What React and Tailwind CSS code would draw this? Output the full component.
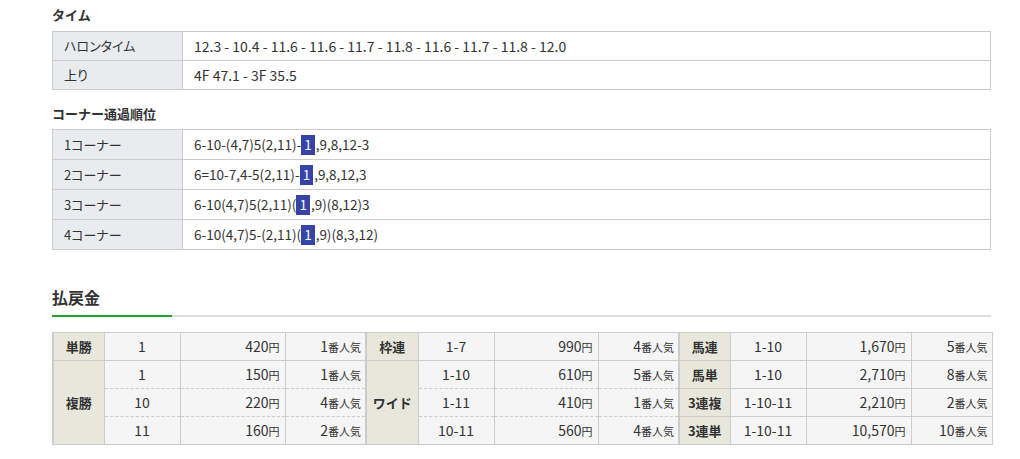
import React from "react";

const F = { fontFamily: '"Noto Sans CJK JP", "Noto Sans", sans-serif' };

function Badge() {
  return (
    <span className="flex items-center justify-center h-[20px] bg-[#3644a8] text-white px-[3px] mr-[1px]">1</span>
  );
}

function InfoTable({ rows, rowH, valSize }) {
  return (
    <table className="w-[939px] border-collapse table-fixed text-[13px] text-[#333]">
      <colgroup>
        <col className="w-[130px]" />
        <col />
      </colgroup>
      <tbody>
        {rows.map((r, i) => (
          <tr key={i} className={rowH}>
            <td className="border border-[#ccc] bg-[#e9ecef] pl-[11px] p-0 [font-feature-settings:'palt']">{r[0]}</td>
            <td className={`border border-[#ccc] bg-white pl-[11px] p-0 ${valSize}`}>
              <div className="flex items-center whitespace-pre">{r[1]}</div>
            </td>
          </tr>
        ))}
      </tbody>
    </table>
  );
}

const Yen = () => <span className="text-[11px]">円</span>;
const Pop = ({ n }) => (
  <>
    {n}
    <span className="text-[11px]">番人気</span>
  </>
);

export default function App() {
  const lbl = "border border-[#ccc] border-l-2 bg-[#e8e7dc] text-center font-bold text-[13px] p-0";
  const cellTop = (r) =>
    r === 0 || r === 1
      ? "border-t border-t-[#ccc] border-solid"
      : "border-t border-t-[#ccc] [border-top-style:dashed]";
  const cellBot = (r) => (r === 0 || r === 3 ? "border-b border-b-[#ccc]" : "border-b-0");

  const grp1 = [
    ["1", "420", "1"],
    ["1", "150", "1"],
    ["10", "220", "4"],
    ["11", "160", "2"],
  ];
  const grp2 = [
    ["1-7", "990", "4"],
    ["1-10", "610", "5"],
    ["1-11", "410", "1"],
    ["10-11", "560", "4"],
  ];
  const grp3 = [
    ["馬連", "1-10", "1,670", "5"],
    ["馬単", "1-10", "2,710", "8"],
    ["3連複", "1-10-11", "2,210", "2"],
    ["3連単", "1-10-11", "10,570", "10"],
  ];

  const dataCells = (d, r, key) => {
    const b = `${cellTop(r)} ${cellBot(r)}`;
    return [
      <td key={key + "a"} className={`border-x border-x-[#ccc] bg-[#f5f5f5] p-0 text-center ${b}`}>{d[0]}</td>,
      <td key={key + "b"} className={`border-x border-x-[#ccc] bg-[#f5f5f5] p-0 text-right pr-[5px] ${b}`}>
        {d[1]}
        <Yen />
      </td>,
      <td key={key + "c"} className={`border-x border-x-[#ccc] bg-[#f5f5f5] p-0 text-right pr-[4px] ${b}`}>
        <Pop n={d[2]} />
      </td>,
    ];
  };
  const dataCells3 = (d) => {
    const b = "border-y border-y-[#ccc]";
    return [
      <td key="3a" className={`border-x border-x-[#ccc] bg-[#f5f5f5] p-0 text-center ${b}`}>{d[1]}</td>,
      <td key="3b" className={`border-x border-x-[#ccc] bg-[#f5f5f5] p-0 text-right pr-[5px] ${b}`}>
        {d[2]}
        <Yen />
      </td>,
      <td key="3c" className={`border-x border-x-[#ccc] bg-[#f5f5f5] p-0 text-right pr-[4px] ${b}`}>
        <Pop n={d[3]} />
      </td>,
    ];
  };

  return (
    <div style={F} className="w-[1020px] h-[459px] bg-white text-[#333] overflow-hidden">
      <div className="ml-[52px] w-[939px] flex flex-col">
        <div className="mt-[5px] h-[20px] leading-[20px] text-[13px] font-bold">タイム</div>
        <div className="mt-[6px]">
          <InfoTable
            rowH="h-[29px]"
            valSize="text-[14px]"
            rows={[
              ["ハロンタイム", "12.3 - 10.4 - 11.6 - 11.6 - 11.7 - 11.8 - 11.6 - 11.7 - 11.8 - 12.0"],
              ["上り", "4F 47.1 - 3F 35.5"],
            ]}
          />
        </div>
        <div className="mt-[14px] h-[20px] leading-[20px] text-[13px] font-bold">コーナー通過順位</div>
        <div className="mt-[5px]">
          <InfoTable
            rowH="h-[30px]"
            valSize="text-[13.5px]"
            rows={[
              ["1コーナー", <><span>6-10-(4,7)5(2,11)-</span><Badge /><span>,9,8,12-3</span></>],
              ["2コーナー", <><span>6=10-7,4-5(2,11)-</span><Badge /><span>,9,8,12,3</span></>],
              ["3コーナー", <><span>6-10(4,7)5(2,11)(</span><Badge /><span>,9)(8,12)3</span></>],
              ["4コーナー", <><span>6-10(4,7)5-(2,11)(</span><Badge /><span>,9)(8,3,12)</span></>],
            ]}
          />
        </div>
        <div className="mt-[35px] h-[24px] leading-[24px] text-[16px] font-bold">払戻金</div>
        <div className="mt-[6px] flex h-[2px]">
          <div className="w-[120px] bg-[#1aa530]" />
          <div className="flex-1 bg-[#ddd]" />
        </div>
        <div className="mt-[15px]">
          <table className="w-[939px] border-collapse table-fixed text-[14px] text-[#333]">
            <colgroup>
              <col className="w-[51px]" />
              <col className="w-[76px]" />
              <col className="w-[105px]" />
              <col className="w-[81px]" />
              <col className="w-[52px]" />
              <col className="w-[76px]" />
              <col className="w-[104px]" />
              <col className="w-[81px]" />
              <col className="w-[51px]" />
              <col className="w-[76px]" />
              <col className="w-[105px]" />
              <col className="w-[81px]" />
            </colgroup>
            <tbody>
              {[0, 1, 2, 3].map((r) => (
                <tr key={r} className="h-[28px]">
                  {r === 0 && <td className={lbl}>単勝</td>}
                  {r === 1 && <td rowSpan={3} className={lbl}>複勝</td>}
                  {dataCells(grp1[r], r, "g1")}
                  {r === 0 && <td className={lbl}>枠連</td>}
                  {r === 1 && <td rowSpan={3} className={lbl}>ワイド</td>}
                  {dataCells(grp2[r], r, "g2")}
                  <td className={lbl}>{grp3[r][0]}</td>
                  {dataCells3(grp3[r])}
                </tr>
              ))}
            </tbody>
          </table>
        </div>
      </div>
    </div>
  );
}
